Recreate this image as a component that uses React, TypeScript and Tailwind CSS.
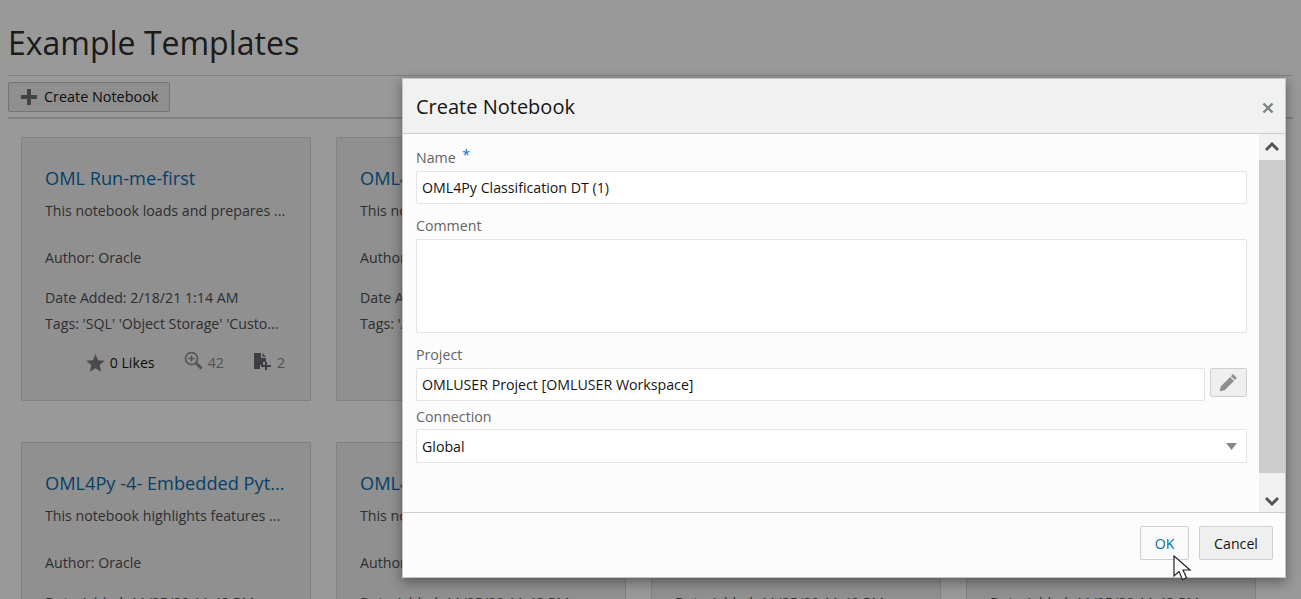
import React from 'react'

const font = "font-['Open_Sans','Noto_Sans',sans-serif]"

const cards = [
  { title: 'OML Run-me-first', desc: 'This notebook loads and prepares ...', date: '2/18/21 1:14 AM', tags: "'SQL' 'Object Storage' 'Custo...", likes: 0, views: 42, copies: 2 },
  { title: 'OML4SQL Anomaly Detect...', desc: 'This notebook shows how to de...', date: '11/25/20 11:48 PM', tags: "'Anomaly Detection' 'SVM'...", likes: 0, views: 12, copies: 1 },
  { title: 'OML4SQL Association R...', desc: 'This notebook shows how to ...', date: '11/25/20 11:48 PM', tags: "'Association Rules' 'SQL'...", likes: 0, views: 9, copies: 1 },
  { title: 'OML4SQL Attribute Imp...', desc: 'This notebook shows how to ...', date: '11/25/20 11:48 PM', tags: "'Attribute Importance'...", likes: 0, views: 7, copies: 1 },
  { title: 'OML4Py -4- Embedded Pyt...', desc: 'This notebook highlights features ...', date: '11/25/20 11:48 PM', tags: "'Python' 'OML4Py'...", likes: 0, views: 21, copies: 3 },
  { title: 'OML4Py Classification DT', desc: 'This notebook shows how to ...', date: '11/25/20 11:48 PM', tags: "'Python' 'Classification'...", likes: 0, views: 30, copies: 4 },
  { title: 'OML4Py Clustering', desc: 'This notebook shows how to ...', date: '11/25/20 11:48 PM', tags: "'Python' 'Clustering'...", likes: 0, views: 14, copies: 2 },
  { title: 'OML4Py Regression', desc: 'This notebook shows how to ...', date: '11/25/20 11:48 PM', tags: "'Python' 'Regression'...", likes: 0, views: 11, copies: 1 },
]

function Star() {
  return (
    <svg width="19" height="18" viewBox="0 0 18 17" className="fill-[#7c7c7c]">
      <path d="M9 0l2.400 5.900 6.400.5-4.900 4.100 1.500 6.200L9 13.400l-5.400 3.300 1.500-6.200L.2 6.400l6.400-.5z" />
    </svg>
  )
}

function Zoom() {
  return (
    <svg width="19" height="19" viewBox="0 0 19 19" fill="none" className="stroke-[#8a8a8a]">
      <circle cx="7.500" cy="7.500" r="6" strokeWidth="1.600" />
      <path d="M7.500 4.500v6M4.500 7.500h6" strokeWidth="1.400" />
      <path d="M12 12l5.500 5.500" strokeWidth="3" />
    </svg>
  )
}

function NewDoc() {
  return (
    <svg width="18" height="17" viewBox="0 0 18 17" className="fill-[#666a6e]">
      <path d="M0 0h7v5h5v4H9v3H6v4H0zM8.500 0L12 3.700H8.500z" />
      <path d="M11 9h2v3h4v2h-4v3h-2v-3H7v-2h4z" />
    </svg>
  )
}

function Card({ c }: { c: (typeof cards)[number] }) {
  return (
    <div className="h-[264px] w-[290px] shrink-0 rounded-[1px] border border-[#d8d8d8] bg-[#f0f0f0] pl-[23px] pr-[20px] pt-[28px]">
      <div className="truncate text-[18.2px] leading-[25px] text-[#0b6cae]">{c.title}</div>
      <div className="mt-[10px] truncate text-[14.2px] leading-[20px] text-[#4f4f4f]">{c.desc}</div>
      <div className="mt-[27px] text-[14.2px] leading-[20px] text-[#4f4f4f]">Author: Oracle</div>
      <div className="mt-[20px] truncate text-[14.2px] leading-[20px] text-[#4f4f4f]">Date Added: {c.date}</div>
      <div className="mt-[6px] truncate text-[14.2px] leading-[20px] text-[#4f4f4f]">Tags: {c.tags}</div>
      <div className="mr-[5px] mt-[19px] flex items-center justify-end text-[14.2px] leading-[20px]">
        <Star />
        <span className="ml-[5px] text-[#161513]">{c.likes} Likes</span>
        <span className="-mt-[5px] ml-[29px]"><Zoom /></span>
        <span className="ml-[5px] text-[#8b8b8b]">{c.views}</span>
        <span className="-mt-[4px] ml-[30px]"><NewDoc /></span>
        <span className="ml-[5px] text-[#8b8b8b]">{c.copies}</span>
      </div>
    </div>
  )
}

function Field({ value, className }: { value: string; className?: string }) {
  return (
    <div className={`flex items-center rounded-[2px] border border-[#e4e4e4] bg-white px-[5px] text-[14.2px] text-[#161513] ${className ?? ''}`}>
      {value}
    </div>
  )
}

function Label({ children }: { children: React.ReactNode }) {
  return <div className="text-[14.2px] leading-[20px] text-[#646464]">{children}</div>
}

function Chevron({ down }: { down?: boolean }) {
  return (
    <svg width="14" height="10" viewBox="0 0 14 10" fill="none" className="stroke-[#555555]">
      <path d={down ? 'M1 2l6 6 6-6' : 'M1 8l6-6 6 6'} strokeWidth="3" />
    </svg>
  )
}

function Dialog() {
  return (
    <div className="absolute left-[402px] top-[78px] flex h-[500px] w-[884px] flex-col border border-[#c4c4c4] bg-[#fcfcfc] shadow-[0_4px_12px_rgba(0,0,0,0.4)]">
      <div className="flex h-[55px] shrink-0 items-center justify-between border-b border-[#cccccc] bg-[#f1f1f1] pl-[13px] pr-[11px] pt-[1px]">
        <span className="text-[20px] text-[#161513]">Create Notebook</span>
        <svg width="12" height="12" viewBox="0 0 12 12" className="mt-[3px] stroke-[#7f8487]" fill="none">
          <path d="M1.500 1.500l9 9M10.500 1.500l-9 9" strokeWidth="2.400" />
        </svg>
      </div>
      <div className="flex min-h-0 flex-1">
        <div className="flex-1 pl-[13px] pr-[12px] pt-[11px]">
          <Label>
            Name <span className="ml-[3px] align-[3px] text-[#0572ce]">*</span>
          </Label>
          <Field value="OML4Py Classification DT (1)" className="mt-[3px] h-[33px]" />
          <div className="mt-[12px]"><Label>Comment</Label></div>
          <div className="mt-[3px] h-[94px] rounded-[2px] border border-[#e4e4e4] bg-white" />
          <div className="mt-[12px]"><Label>Project</Label></div>
          <div className="mt-[3px] flex gap-[5px]">
            <Field value="OMLUSER Project [OMLUSER Workspace]" className="h-[33px] flex-1" />
            <div className="flex h-[29px] w-[37px] items-center justify-center rounded-[2px] border border-[#cfcfcf] bg-[#efefef]">
              <svg width="19" height="19" viewBox="0 0 17 17" className="fill-[#8b8f92]">
                <path d="M12.500 1l3.500 3.500-1.800 1.800-3.500-3.500zM9.900 3.600l3.500 3.500-8.400 8.400L.6 16.400l.9-4.400z" />
              </svg>
            </div>
          </div>
          <div className="mt-[6px]"><Label>Connection</Label></div>
          <div className="mt-[2px] flex h-[34px] items-center justify-between rounded-[2px] border border-[#e4e4e4] bg-white pl-[5px] pr-[9px] pt-[1px] text-[14.2px] text-[#161513]">
            Global
            <svg width="11" height="7" viewBox="0 0 11 7" className="fill-[#83888c]"><path d="M0 0h11L5.500 7z" /></svg>
          </div>
        </div>
        <div className="flex w-[26px] shrink-0 flex-col">
          <div className="flex h-[26px] items-center justify-center bg-[#f1f1f1]"><Chevron /></div>
          <div className="flex-1 bg-[#cdcdcd]" />
          <div className="flex h-[39px] items-end justify-center bg-[#f1f1f1] pb-[6px]"><Chevron down /></div>
        </div>
      </div>
      <div className="flex h-[65px] shrink-0 items-start justify-end gap-[10px] border-t border-[#cccccc] pr-[12px] pt-[13px]">
        <div className="flex h-[34px] w-[49px] items-center justify-center rounded-[2px] border border-[#cfcfcf] bg-[#fafafa] pt-[1px] text-[14.2px] text-[#0b6cae]">OK</div>
        <div className="flex h-[34px] w-[74px] items-center justify-center rounded-[2px] border border-[#cfcfcf] bg-[#efefef] pt-[1px] text-[14.2px] text-[#161513]">Cancel</div>
      </div>
    </div>
  )
}

export default function App() {
  return (
    <div className={`relative h-[599px] w-[1301px] overflow-hidden bg-white ${font}`}>
      <div className="px-[8px] pt-[19px]">
        <h1 className="h-[56px] text-[32px] leading-[48px] text-[#2f2e2c]">Example Templates</h1>
        <div className="flex h-[44px] items-center border-y border-[#d8d8d8] [border-bottom-width:2px]">
          <div className="flex h-[30px] w-[162px] items-center rounded-[2px] border border-[#c4c4c4] bg-[#efefef] pl-[12px] pt-[1px] text-[14.4px] text-[#161513]">
            <svg width="16" height="16" viewBox="0 0 16 16" className="mr-[7px] fill-[#6d7074]">
              <path d="M6 0h4v6h6v4h-6v6H6v-6H0V6h6z" />
            </svg>
            Create Notebook
          </div>
        </div>
        <div className="grid grid-cols-[repeat(4,290px)] gap-x-[25px] gap-y-[41px] pl-[13px] pt-[18px]">
          {cards.map((c) => (
            <Card key={c.title} c={c} />
          ))}
        </div>
      </div>
      <div className="absolute inset-0 bg-black/40" />
      <Dialog />
      <svg width="20" height="28" viewBox="0 0 20 28" className="absolute left-[1173px] top-[555px]">
        <path d="M1 1v20l5-4.500 3.500 8 4-1.800-3.500-7.700h7z" fill="#ffffff" stroke="#222222" strokeWidth="1.200" />
      </svg>
    </div>
  )
}
